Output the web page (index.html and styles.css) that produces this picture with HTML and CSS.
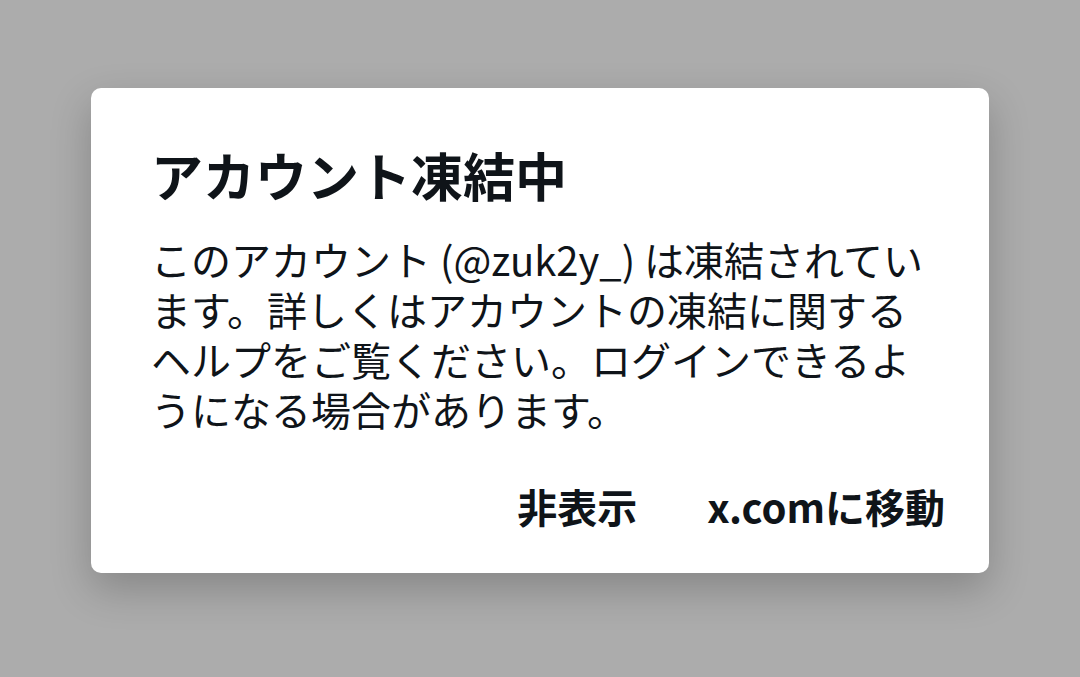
FILE: index.html
```html
<!DOCTYPE html>
<html lang="ja">
<head>
    <meta charset="UTF-8">
    <title>アカウント凍結中</title>
    <link rel="stylesheet" href="styles.css">
</head>
<body>
    <div class="overlay">
        <div class="dialog">
            <h2 class="dialog-title">アカウント凍結中</h2>
            <p class="dialog-text">このアカウント (@zuk2y_) は凍結されています。詳しくはアカウントの凍結に関するヘルプをご覧ください。ログインできるようになる場合があります。</p>
            <div class="dialog-actions">
                <button class="action">非表示</button>
                <button class="action">x.comに移動</button>
            </div>
        </div>
    </div>
</body>
</html>
```

FILE: styles.css
```css
html,
body {
    margin: 0;
    height: 100%;
}
body {
    background: #acacac;
    color: #0f1419;
    font-family: "Noto Sans CJK JP", "Noto Sans", sans-serif;
}
.overlay {
    height: 100%;
    display: flex;
    align-items: flex-start;
    justify-content: center;
    padding-top: 88px;
    box-sizing: border-box;
}
.dialog {
    width: 898px;
    box-sizing: border-box;
    background: #fff;
    border-radius: 10px;
    padding: 56px 44px 42px 60px;
    box-shadow: 0 16px 40px rgba(0, 0, 0, 0.22);
}
.dialog-title {
    margin: 0;
    font-size: 52px;
    line-height: 62px;
    font-weight: 700;
}
.dialog-text {
    margin: 28px 0 0;
    font-size: 40px;
    line-height: 50px;
}
.dialog-actions {
    display: flex;
    justify-content: flex-end;
    gap: 70px;
    margin-top: 47px;
}
.action {
    background: none;
    border: 0;
    padding: 0;
    color: #0f1419;
    font-family: inherit;
    font-size: 40px;
    line-height: 50px;
    font-weight: 700;
}
```
